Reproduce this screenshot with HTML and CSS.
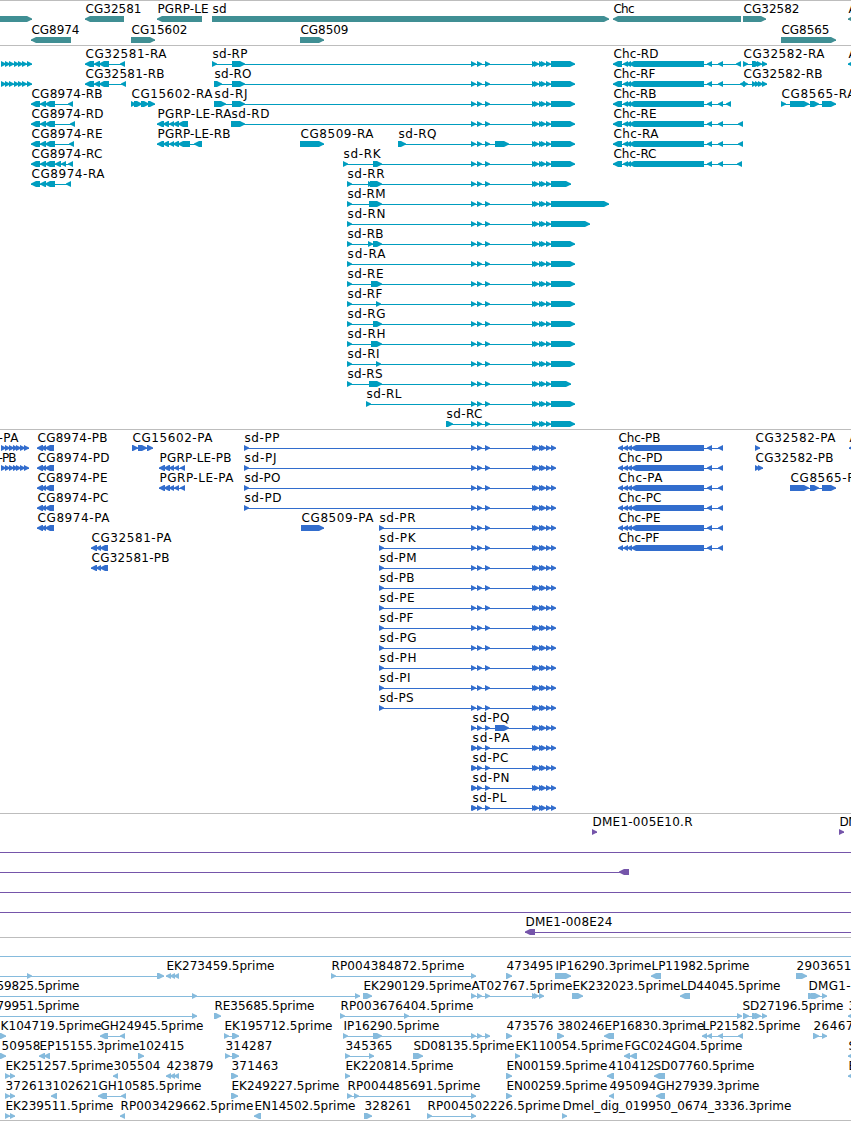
FILE: index.html
```html
<!DOCTYPE html>
<html lang="en">
  <head>
    <meta charset="UTF-8" />
    <title>Genome tracks</title>
    <link rel="stylesheet" href="styles.css">
  </head>
  <body>
    <div class="track gene" id="gene"></div>
    <div class="track mrna" id="mrna"></div>
    <div class="track protein" id="protein"></div>
    <div class="track bac" id="bac"></div>
    <div class="track est" id="est"></div>
    <script src="tracks.js"></script>
  </body>
</html>
```

FILE: styles.css
```css
body {
  margin: 0;
  background-color: #fff;
  font-family: "DejaVu Sans", sans-serif;
  font-size: 12px;
  overflow: hidden;
}

.track {
  padding: 1px 0 2px;
  border-top: 1px solid #bdbdbd;
}

.row {
  display: block;
  width: 100%;
  height: 20px;
  overflow: hidden;
}

.row text {
  fill: #000;
}

.exon,
.intron {
  fill: currentColor;
}

.intron {
  shape-rendering: crispEdges;
}

.gene {
  color: #408f94;
  padding-top: 0;
}

.gene .row {
  padding-top: 1px;
}

.mrna {
  color: #009dbf;
}

.protein {
  color: #326dcd;
}

.bac {
  color: #7555aa;
}

.est {
  color: #86bbdd;
  padding-bottom: 1px;
  border-bottom: 1px solid #bdbdbd;
}
```

FILE: tracks.js
```javascript
// feature: [label, x, label width, strand, "start:end ...", intron line]
const SD = " 471:476 477:482 485:490 532:537 534:539 539:544 541:546 546:551 ";
const SD_Q = " 471:476 477:482 485:490 495:509 532:537 534:539 539:544 541:546 546:551 ";
const CHC = "613:622 623:628 626:631 629:704 707:712 718:723 ";
const CHC_P = "618:623 623:628 627:632 631:704 707:712 718:723";
const CG8974 = "31:40 40:46 45:55 ";
const CG8974_P = "37:43 41:46 45:54";
const LEFT = ["", 0, 0, ">", "1:6 5:10 9:14 14:19 18:23 22:27 27:32"];
const LEFT_P = "1:6 5:10 9:14 13:18 16:21 20:25 24:29";
const PGRP_P = "159:165 164:170 169:174 174:179 180:185";

function sdR(name, x, w, exons, end) {
  return ["sd-" + name, x, w, ">", exons + SD + "551:" + (end || 575)];
}

function sdP(name, x, w) {
  return ["sd-" + name, x, w, ">", x + ":" + (x + 5) + SD + "551:556"];
}

const tracks = {
  gene: [
    [
      ["", 0, 0, ">", "-10:32"],
      ["CG32581", 85, 57, "<", "85:124"],
      ["PGRP-LE", 157, 52, "<", "157:202"],
      ["sd", 212, 15, ">", "212:609"],
      ["Chc", 613, 22, "<", "613:741"],
      ["CG32582", 743, 57, ">", "743:766"],
      ["A", 848, 9, "<", "848:870"],
    ],
    [
      ["CG8974", 31, 49, "<", "31:71"],
      ["CG15602", 131, 57, ">", "131:155"],
      ["CG8509", 300, 49, ">", "300:324"],
      ["CG8565", 781, 49, ">", "781:836"],
    ],
  ],
  mrna: [
    [
      LEFT,
      ["CG32581-RA", 85, 82, "<", "85:94 94:100 99:109 120:125"],
      sdR("RP", 212, 36, "212:217 232:245"),
      ["Chc-RD", 613, 46, "<", CHC + "736:741"],
      ["CG32582-RA", 743, 82, ">", "743:748 752:760 757:762 762:767"],
      ["A", 848, 9, "<", "848:870"],
    ],
    [
      LEFT,
      ["CG32581-RB", 85, 80, "<", "85:94 94:100 99:109 121:126"],
      sdR("RO", 214, 38, "214:222 232:245"),
      ["Chc-RF", 613, 43, "<", CHC + "740:745"],
      ["CG32582-RB", 743, 80, ">", "743:748 752:757 755:760 758:763 762:767"],
    ],
    [
      ["CG8974-RB", 31, 72, "<", CG8974 + "68:73"],
      ["CG15602-RA", 131, 82, ">", "131:136 134:142 141:149 148:155"],
      sdR("RJ", 214, 34, "214:226 232:245"),
      ["Chc-RB", 613, 44, "<", CHC + "726:731"],
      ["CG8565-RA", 781, 75, ">", "781:786 790:809 810:819 822:836"],
    ],
    [
      ["CG8974-RD", 31, 73, "<", CG8974 + "70:75"],
      ["PGRP-LE-RA", 157, 75, "<", "157:164 163:169 169:174 173:179 178:188"],
      sdR("RD", 231, 39, "231:245"),
      ["Chc-RE", 613, 44, "<", CHC + "738:743"],
    ],
    [
      ["CG8974-RE", 31, 72, "<", CG8974 + "69:74"],
      ["PGRP-LE-RB", 157, 74, "<", "157:164 163:169 169:174 173:179 178:190 194:202"],
      ["CG8509-RA", 300, 74, ">", "300:324"],
      ["sd-RQ", 398, 39, ">", "398:406" + SD_Q + "551:575"],
      ["Chc-RA", 613, 46, "<", CHC + "738:743"],
    ],
    [
      ["CG8974-RC", 31, 72, "<", CG8974 + "55:61 61:66 68:73"],
      sdR("RK", 343, 38, "343:348 373:382"),
      ["Chc-RC", 613, 44, "<", CHC + "737:742"],
    ],
    [
      ["CG8974-RA", 31, 74, "<", CG8974 + "66:71"],
      sdR("RR", 347, 38, "347:352 368:373 370:382", 571),
    ],
    [sdR("RM", 347, 39, "347:352 369:382", 609)],
    [sdR("RN", 347, 39, "347:352", 590)],
    [sdR("RB", 347, 37, "347:352 368:373 373:382")],
    [sdR("RA", 347, 39, "347:352")],
    [sdR("RE", 347, 37, "347:352 371:382")],
    [sdR("RF", 347, 36, "347:352 376:381")],
    [sdR("RG", 347, 39, "347:352 373:382")],
    [sdR("RH", 347, 39, "347:352 371:382")],
    [sdR("RI", 347, 33, "347:352 376:381")],
    [sdR("RS", 347, 36, "347:352 369:382", 571)],
    [sdR("RL", 366, 36, "366:371")],
    [sdR("RC", 446, 37, "446:453")],
  ],
  protein: [
    [
      ["-PA", -2, 21, ">", LEFT_P],
      ["CG8974-PB", 37, 71, "<", CG8974_P],
      ["CG15602-PA", 132, 81, ">", "132:138 138:147 147:153"],
      sdP("PP", 244, 36),
      ["Chc-PB", 618, 43, "<", CHC_P],
      ["CG32582-PA", 755, 81, ">", "755:760"],
      ["A", 849, 9, "<", "849:870"],
    ],
    [
      ["-PB", -2, 19, ">", LEFT_P],
      ["CG8974-PD", 37, 73, "<", CG8974_P],
      ["PGRP-LE-PB", 159, 73, "<", PGRP_P],
      sdP("PJ", 244, 33),
      ["Chc-PD", 618, 45, "<", CHC_P],
      ["CG32582-PB", 755, 79, ">", "755:760 758:763"],
    ],
    [
      ["CG8974-PE", 37, 71, "<", CG8974_P],
      ["PGRP-LE-PA", 159, 75, "<", PGRP_P],
      sdP("PO", 244, 37),
      ["Chc-PA", 618, 45, "<", CHC_P],
      ["CG8565-PA", 790, 73, ">", "790:809 810:819 822:836"],
    ],
    [
      ["CG8974-PC", 37, 72, "<", CG8974_P],
      sdP("PD", 244, 38),
      ["Chc-PC", 618, 44, "<", CHC_P],
    ],
    [
      ["CG8974-PA", 37, 73, "<", CG8974_P],
      ["CG8509-PA", 301, 73, ">", "301:324"],
      sdP("PR", 379, 37),
      ["Chc-PE", 618, 43, "<", CHC_P],
    ],
    [
      ["CG32581-PA", 91, 81, "<", "91:97 96:101 100:108"],
      sdP("PK", 379, 37),
      ["Chc-PF", 618, 42, "<", CHC_P],
    ],
    [
      ["CG32581-PB", 91, 79, "<", "91:97 96:101 100:108"],
      sdP("PM", 379, 38),
    ],
    [sdP("PB", 379, 36)],
    [sdP("PE", 379, 36)],
    [sdP("PF", 379, 35)],
    [sdP("PG", 379, 38)],
    [sdP("PH", 379, 38)],
    [sdP("PI", 379, 32)],
    [sdP("PS", 379, 35)],
    [["sd-PQ", 472, 38, ">", SD_Q + "551:556"]],
    [sdP("PA", 472, 38)],
    [sdP("PC", 472, 37)],
    [sdP("PN", 472, 38)],
    [sdP("PL", 472, 35)],
  ],
  bac: [
    [
      ["DME1-005E10.R", 592, 101, ">", "592:597"],
      ["DME1", 839, 34, ">", "839:844"],
    ],
    [["", 0, 0, ">", "", "-10:860"]],
    [["", 0, 0, "<", "619:629", "-10:629"]],
    [["", 0, 0, ">", "", "-10:860"]],
    [["", 0, 0, ">", "", "-10:860"]],
    [["DME1-008E24", 525, 88, "<", "525:535", "525:860"]],
  ],
  est: [
    [["", 0, 0, ">", "", "-10:860"]],
    [
      ["", 0, 0, ">", "27:32 157:164", "-10:164"],
      ["EK273459.5prime", 166, 109, "<", "166:171 170:175 174:179"],
      ["RP004384872.5prime", 331, 134, ">", "331:336 471:476"],
      ["473495", 506, 48, ">", "506:512"],
      ["IP16290.3prime", 555, 97, ">", "555:571"],
      ["LP11982.5prime", 651, 99, "<", "651:661"],
      ["2903651", 796, 56, ">", "796:807"],
    ],
    [
      ["59825.5prime", -4, 84, ">", "192:197 355:360", "-10:360"],
      ["EK290129.5prime", 363, 109, ">", "363:372"],
      ["AT02767.5prime", 471, 102, ">", "471:476 477:482 485:490 532:537 534:539 539:544"],
      ["EK232023.5prime", 572, 109, ">", "572:583"],
      ["LD44045.5prime", 680, 101, "<", "680:690"],
      ["DMG1-", 808, 43, ">", "808:815 811:820 822:827"],
    ],
    [
      ["79951.5prime", -4, 84, ">", "192:197", "-10:197"],
      ["RE35685.5prime", 214, 101, ">", "214:221"],
      ["RP003676404.5prime", 340, 134, ">", "340:345 404:409 737:742"],
      ["SD27196.5prime", 742, 102, ">", "743:749 752:759 755:761 762:767"],
      ["3", 848, 9, "<", "848:870"],
    ],
    [
      ["K104719.5prime", 0, 102, ">", "0:6"],
      ["GH24945.5prime", 100, 104, "<", "100:108 120:125"],
      ["EK195712.5prime", 224, 109, ">", "224:229 232:239"],
      ["IP16290.5prime", 343, 97, ">", "343:348 373:382 471:476 477:482 485:490"],
      ["473576", 506, 48, ">", "506:512"],
      ["380246", 557, 48, ">", "557:564"],
      ["EP16830.3prime", 604, 101, "<", "604:614"],
      ["LP21582.5prime", 702, 99, "<", "702:707 707:712 718:723 738:743"],
      ["26467", 813, 41, ">", "813:819 822:827"],
    ],
    [
      ["50958", 1, 40, ">", "0:6"],
      ["EP15155.3prime", 39, 101, "<", "39:45 44:50"],
      ["102415", 138, 47, ">", "138:144"],
      ["314287", 225, 48, ">", "225:230 232:239"],
      ["345365", 345, 48, ">", "345:350 369:374"],
      ["SD08135.5prime", 413, 102, ">", "413:423"],
      ["EK110054.5prime", 515, 109, ">", "515:520"],
      ["FGC024G04.5prime", 624, 119, "<", "624:630 630:637"],
      ["S", 848, 9, "<", "848:870"],
    ],
    [
      ["EK251257.5prime", 5, 109, ">", "5:10 10:15"],
      ["305504", 113, 48, "<", "113:118"],
      ["423879", 166, 48, "<", "166:171 170:175 174:179"],
      ["371463", 231, 48, ">", "231:238"],
      ["EK220814.5prime", 345, 109, ">", "345:350"],
      ["EN00159.5prime", 506, 102, ">", "506:512"],
      ["410412", 608, 47, "<", "607:614"],
      ["SD07760.5prime", 653, 102, "<", "654:665"],
      ["E", 848, 9, "<", "848:870"],
    ],
    [
      ["372613", 5, 48, ">", "5:10 10:15"],
      ["102621", 52, 47, "<", "51:57"],
      ["GH10585.5prime", 98, 104, "<", "98:107 121:126"],
      ["EK249227.5prime", 231, 109, ">", "231:238"],
      ["RP004485691.5prime", 347, 134, ">", "347:352 354:359 471:476"],
      ["EN00259.5prime", 506, 102, ">", "506:512"],
      ["495094", 609, 48, "<", "609:614"],
      ["GH27939.3prime", 656, 104, "<", "656:665"],
    ],
    [
      ["EK239511.5prime", 5, 109, ">", "5:10 10:15"],
      ["RP003429662.5prime", 120, 134, "<", "120:125"],
      ["EN14502.5prime", 254, 102, "<", "254:261"],
      ["328261", 364, 48, ">", "364:372"],
      ["RP004502226.5prime", 427, 134, ">", "427:432 471:476"],
      ["Dmel_dig_019950_0674_3336.3prime", 562, 230, ">", "562:567"],
    ],
  ],
};

const NS = "http://www.w3.org/2000/svg";

function add(parent, tag, attrs) {
  const el = document.createElementNS(NS, tag);
  for (const key in attrs) el.setAttribute(key, attrs[key]);
  parent.appendChild(el);
  return el;
}

// the tip takes the last 5px of an exon and bulges a little
function exonPoints(a, b, strand) {
  const tail = strand === ">" ? a : b;
  const tip = strand === ">" ? b : a;
  const d = strand === ">" ? -1 : 1;
  return [
    [tail, 14],
    [tip + 5 * d, 14],
    [tip + 2 * d, 15.6],
    [tip, 16.6],
    [tip, 17.6],
    [tip + 2 * d, 18.4],
    [tip + 5 * d, 20],
    [tail, 20],
  ].join(" ");
}

function drawFeature(svg, [label, x, w, strand, exonText, line]) {
  const exons = exonText.trim().split(/\s+/).filter(Boolean).map(e => e.split(":").map(Number));
  const [from, to] = line ? line.split(":").map(Number) : [exons[0][0], exons[exons.length - 1][1]];
  add(svg, "rect", { class: "intron", x: from, y: 17, width: to - from, height: 1 });
  for (const [a, b] of exons) {
    add(svg, "polygon", { class: "exon", points: exonPoints(a, b, strand) });
  }
  if (label) {
    add(svg, "text", { x: x + 0.5, y: 11, textLength: w - 1 }).textContent = label;
  }
}

for (const id in tracks) {
  for (const features of tracks[id]) {
    const svg = add(document.getElementById(id), "svg", { class: "row" });
    features.forEach(f => drawFeature(svg, f));
  }
}
```
